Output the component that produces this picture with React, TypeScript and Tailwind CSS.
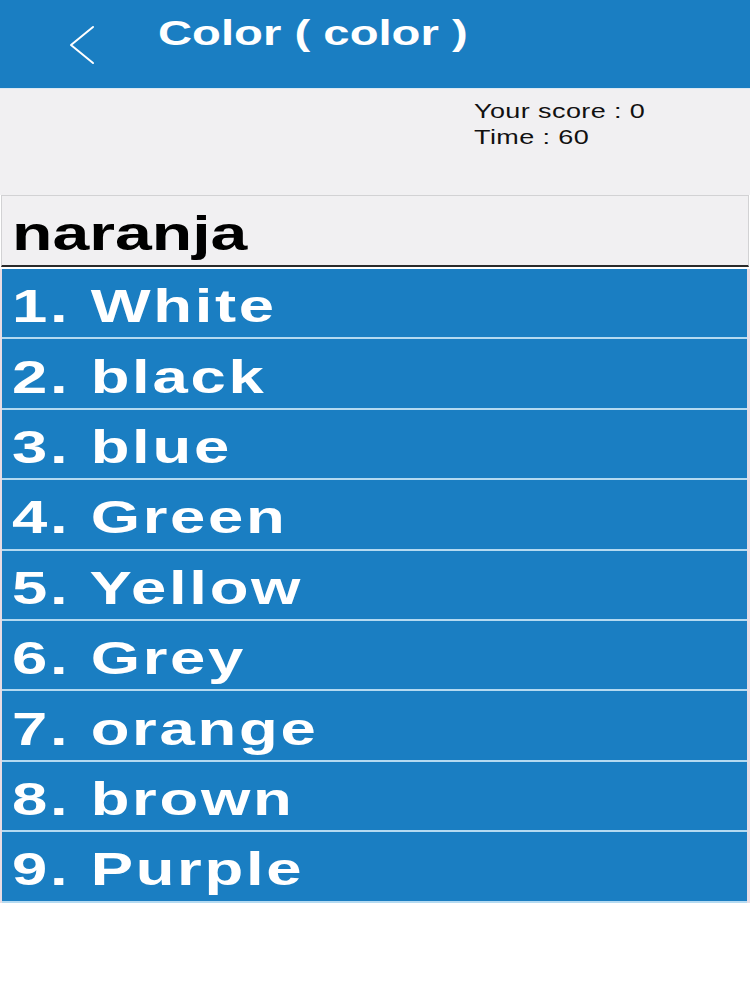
const colors = [
  "White",
  "black",
  "blue",
  "Green",
  "Yellow",
  "Grey",
  "orange",
  "brown",
  "Purple",
];

// the screenshot is stretched sideways, so text is widened with scale-x
const Stretched = ({ children, className = "" }: { children: React.ReactNode; className?: string }) => (
  <span className={`inline-block origin-left scale-x-[1.35] whitespace-pre ${className}`}>{children}</span>
);

const App = () => {
  return (
    <div className="w-[750px] h-[1000px] bg-white font-['Liberation_Sans',Arial,sans-serif]">
      <header className="h-[88px] bg-[#1a7ec2] flex items-start text-white">
        <button className="ml-[66px] mt-[24px] w-[32px] h-[42px] flex items-center justify-center">
          <svg width="30" height="40" viewBox="0 0 30 40" fill="none">
            <polyline
              points="26,2 4,20 26,38"
              stroke="white"
              strokeWidth="2"
              strokeLinecap="round"
              strokeLinejoin="round"
            />
          </svg>
        </button>
        <h1 className="ml-[60px] mt-[12px] text-[35px] font-bold leading-[42px]">
          <Stretched>Color ( color )</Stretched>
        </h1>
      </header>

      <div className="h-[107px] bg-[#f1f0f2] border-t border-[#d9e9f4] flex justify-end">
        <div className="w-[276px] pt-[9px] text-[20px] leading-[26px] text-[#111]">
          <div>
            <Stretched className="tracking-[0.3px]">Your score : 0</Stretched>
          </div>
          <div>
            <Stretched className="tracking-[0.3px]">Time : 60</Stretched>
          </div>
        </div>
      </div>

      <div className="h-[72px] mx-[1px] bg-[#f1f0f2] border border-b-2 border-[#d2d2d4] border-b-[#2a2a2a] flex items-end pl-[10px] pb-[2px]">
        <span className="text-[49px] font-bold leading-[60px] text-black">
          <Stretched>naranja</Stretched>
        </span>
      </div>

      <ul className="mt-[2px] pl-[2px] pr-[3px] bg-[#e9dde4]">
        {colors.map((c, i) => (
          <li
            key={c}
            className="h-[70.4px] bg-[#1a7ec2] border-b-[2px] border-[#b4daf1] flex items-center pl-[10px] pt-[6px] text-white"
          >
            <span className="text-[47px] font-bold leading-[56px]">
              <Stretched className="tracking-[2px]">{`${i + 1}. ${c}`}</Stretched>
            </span>
          </li>
        ))}
      </ul>
    </div>
  );
};

export default App;
